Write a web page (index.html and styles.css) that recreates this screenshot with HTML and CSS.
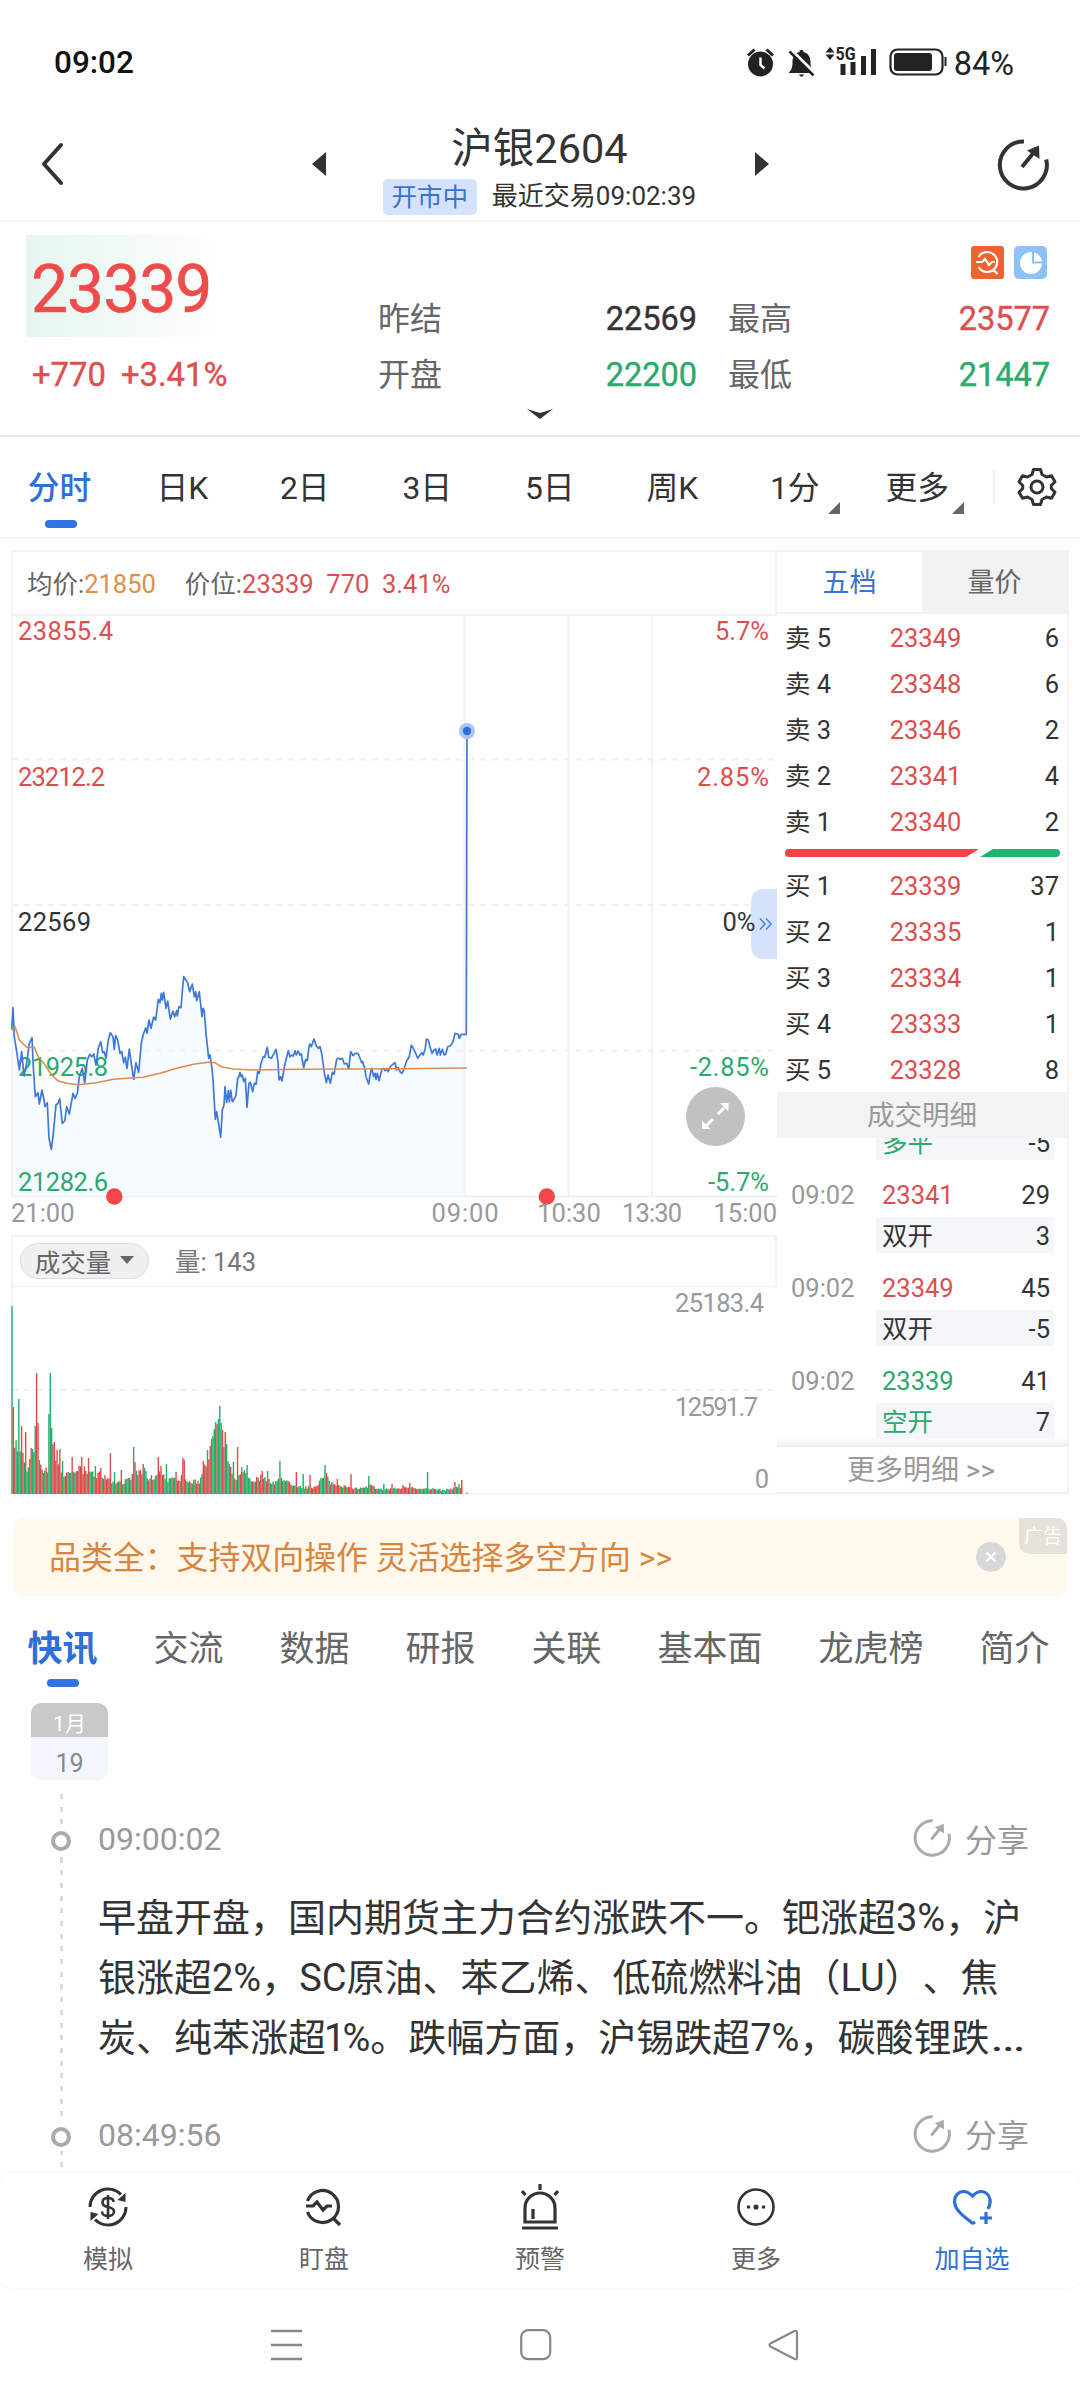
FILE: index.html
```html
<!DOCTYPE html>
<html lang="zh-CN">
<head>
<meta charset="utf-8">
<title>沪银2604</title>
<link rel="stylesheet" href="styles.css">
</head>
<body>
<svg class="defs" width="0" height="0">
  <symbol id="share" viewBox="0 0 52 52">
    <path d="M27 2.5A23.5 23.5 0 1 0 49.2 20.5" fill="none" stroke="currentColor" stroke-width="4"/>
    <path d="M25 28 38 12" stroke="currentColor" stroke-width="4" fill="none"/>
    <path d="M42 6.500 42.500 20 30 11.500z" fill="currentColor"/>
  </symbol>
</svg>
<div class="phone">
  <div class="status">
    <span class="clock">09:02</span>
    <svg class="status-icons" width="206" height="40" viewBox="742 42 206 40">
      <g fill="#222">
        <circle cx="760.500" cy="64" r="12.500"/>
        <path d="M748 55.500l6.500-6M773 55.500l-6.500-6" stroke="#222" stroke-width="3"/>
        <path d="M760.500 57.500v7.500l4 3.500" stroke="#fff" stroke-width="2.500" fill="none"/>
        <path d="M788.500 73c3-3 4-5 4-11 0-6 3-9 7-10 0-3 4-3 4 0 4 1 7 4 7 10 0 6 1 8 4 11z"/>
        <path d="M798.500 74.500h6l-3 2.500z"/>
        <path d="M791 50.500 816 75" stroke="#fff" stroke-width="4"/>
        <path d="M789.500 51.500 813.500 75.500" stroke="#222" stroke-width="2.500"/>
        <path d="M830 47l4.500 5.500h-9zM830 60l4.500-5.500h-9z"/>
        <rect x="840.500" y="64" width="5" height="11"/><rect x="850.500" y="62" width="5" height="13"/>
        <rect x="861" y="56" width="5" height="19"/><rect x="871" y="49" width="5" height="26"/>
        <rect x="894" y="53" width="38" height="18" rx="3"/>
        <path d="M945.500 57v9" stroke="#222" stroke-width="2"/>
      </g>
      <rect x="890.500" y="49.500" width="52" height="25" rx="7" fill="none" stroke="#222" stroke-width="2.200"/>
      <text x="835.500" y="60" class="fiveg" textLength="20" lengthAdjust="spacingAndGlyphs">5G</text>
    </svg>
    <span class="battery">84%</span>
  </div>

  <header class="top">
    <svg class="back" width="24" height="44" viewBox="0 0 24 44"><path d="M21 3 4 22 21 41" fill="none" stroke="#333" stroke-width="4" stroke-linecap="round" stroke-linejoin="round"/></svg>
    <svg class="prev" width="14" height="24" viewBox="0 0 14 24"><path d="M14 0v24L0 12z" fill="#333"/></svg>
    <div class="title">
      <h1>沪银2604</h1>
      <div class="sub"><span class="badge">开市中</span><span>最近交易09:02:39</span></div>
    </div>
    <svg class="next" width="14" height="24" viewBox="0 0 14 24"><path d="M0 0v24l14-12z" fill="#333"/></svg>
    <svg class="share-top" width="52" height="52"><use href="#share"/></svg>
  </header>

  <section class="quote">
    <div class="last">
      <div class="price">23339</div>
      <div class="change"><span>+770</span><span>+3.41%</span></div>
    </div>
    <div class="stats">
      <div class="marks">
        <svg width="33" height="33" viewBox="0 0 33 33"><rect width="33" height="33" rx="3" fill="#ee632f"/><path d="M7.500 11A10 10 0 1 1 7.500 21M22.500 24l4 4M5 16h6l3-3 4 6 3-3h3" fill="none" stroke="#fff" stroke-width="2.200"/></svg>
        <svg width="33" height="33" viewBox="0 0 33 33"><rect width="33" height="33" rx="5" fill="#8bc2f8"/><circle cx="17" cy="17" r="11" fill="#fff"/><path d="M19 5v11.500h11" fill="none" stroke="#8bc2f8" stroke-width="2"/></svg>
      </div>
      <div class="grid">
        <span class="k">昨结</span><b>22569</b><span class="k">最高</span><b class="up">23577</b>
        <span class="k">开盘</span><b class="down">22200</b><span class="k">最低</span><b class="down">21447</b>
      </div>
    </div>
    <svg class="more" width="28" height="10" viewBox="0 0 28 10"><path d="M1 0 14 4 27 0 14 10z" fill="#333"/></svg>
  </section>

  <nav class="periods">
    <span class="on">分时</span><span>日K</span><span>2日</span><span>3日</span><span>5日</span><span>周K</span><span class="drop">1分</span><span class="drop">更多</span>
    <i class="sep"></i>
    <svg class="gear" width="40" height="40" viewBox="0 0 40 40"><path d="M16.500 2.500h7l1.500 5 4.500 2.500 5-1.200 3.500 6-3.700 3.700v3l3.700 3.700-3.500 6-5-1.200-4.500 2.500-1.500 5h-7l-1.500-5-4.500-2.500-5 1.200-3.500-6 3.700-3.700v-3L2 14.800l3.500-6 5 1.200L15 7.500z" fill="none" stroke="#333" stroke-width="3" stroke-linejoin="round"/><circle cx="20" cy="20" r="6" fill="none" stroke="#333" stroke-width="3"/></svg>
  </nav>

  <main class="market">
    <div class="charts">
      <div class="legend"><span>均价:<em class="avg">21850</em></span><span>价位:<em>23339&nbsp; 770&nbsp; 3.41%</em></span></div>
      <svg class="chart" width="766" height="621" viewBox="11 614 766 621">
        <path id="area" fill="#f6fbff"/>
        <g stroke="#f2f2f2" stroke-width="2" fill="none">
          <path d="M11 615H777M11 1196.500H777M464.500 615V1196M568.500 615V1196M652 615V1196"/>
          <path d="M12 614V1196" />
          <path d="M12 759.500H777M12 905H777M12 1050.500H777" stroke-dasharray="6 6"/>
        </g>
        <g class="lab up"><text x="18" y="640" textLength="95">23855.4</text><text x="18" y="786" textLength="87">23212.2</text><text x="769" y="640" class="r">5.7%</text><text x="769" y="786" class="r" textLength="72">2.85%</text></g>
        <g class="lab"><text x="18" y="931" textLength="73">22569</text></g>
        <g class="lab down"><text x="18" y="1076" textLength="90">21925.8</text><text x="18" y="1191" textLength="90">21282.6</text><text x="769" y="1076" class="r" textLength="79">-2.85%</text><text x="769" y="1191" class="r">-5.7%</text></g>
        <path id="line" fill="none" stroke="#3f79d8" stroke-width="1.700" stroke-linejoin="round"/>
        <path id="mean" fill="none" stroke="#dc8c50" stroke-width="1.600"/>
        <circle cx="467" cy="731" r="8" fill="#a9c6f4"/><circle cx="467" cy="731" r="4.200" fill="#2f6fdc"/>
        <path d="M777 889h-14a12 12 0 0 0-12 12v46a12 12 0 0 0 12 12h14z" fill="#d5e2fb"/>
        <path d="M760 918.500l5 5.500-5 5.500M766 918.500l5 5.500-5 5.500" fill="none" stroke="#4d86e4" stroke-width="1.600"/>
        <g class="lab"><text x="755.500" y="931" class="r">0%</text></g>
        <circle cx="715.500" cy="1116.500" r="29.500" fill="#c1c1c1"/>
        <path d="M718 1114l6-6M713 1119l-6 6" stroke="#fff" stroke-width="3"/>
        <path d="M728.500 1103v8.500l-8.500-8.500zM702 1129v-8.500l8.500 8.500z" fill="#fff"/>
        <g class="lab axis"><text x="11" y="1222">21:00</text><text x="465" y="1222" class="m" textLength="67">09:00</text><text x="569" y="1222" class="m">10:30</text><text x="652" y="1222" class="m" textLength="60">13:30</text><text x="777" y="1222" class="r">15:00</text></g>
        <circle cx="114.300" cy="1196.500" r="8.200" fill="#f34646"/><circle cx="546.800" cy="1196.500" r="8.200" fill="#f34646"/>
      </svg>
      <div class="volhead"><span class="pill">成交量<svg width="14" height="8" viewBox="0 0 14 8"><path d="M0 0h14L7 8z" fill="#666"/></svg></span><span>量: 143</span></div>
      <svg class="chart" width="766" height="208" viewBox="11 1286 766 208">
        <path d="M11 1286.500H777M11 1493.500H777M12 1286V1494" stroke="#f2f2f2" stroke-width="1.500"/>
        <path d="M12 1390H777" stroke="#f2f2f2" stroke-width="2" stroke-dasharray="6 6"/>
        <g id="bars"></g>
        <g class="lab axis"><text x="764" y="1312" class="r" textLength="89">25183.4</text><text x="758" y="1416" class="r" textLength="83">12591.7</text><text x="769" y="1488" class="r">0</text></g>
      </svg>
    </div>

    <aside class="book">
      <div class="booktabs"><span class="on">五档</span><span>量价</span></div>
      <div class="levels">
        <div><span>卖 5</span><em>23349</em><b>6</b></div>
        <div><span>卖 4</span><em>23348</em><b>6</b></div>
        <div><span>卖 3</span><em>23346</em><b>2</b></div>
        <div><span>卖 2</span><em>23341</em><b>4</b></div>
        <div><span>卖 1</span><em>23340</em><b>2</b></div>
      </div>
      <svg class="ratio" width="275" height="8" viewBox="0 0 275 8"><path d="M4 0H194L181 8H4a4 4 0 0 1 0-8z" fill="#ef4446"/><path d="M208 0h63a4 4 0 0 1 0 8h-76z" fill="#1fb36c"/></svg>
      <div class="levels buy">
        <div><span>买 1</span><em>23339</em><b>37</b></div>
        <div><span>买 2</span><em>23335</em><b>1</b></div>
        <div><span>买 3</span><em>23334</em><b>1</b></div>
        <div><span>买 4</span><em>23333</em><b>1</b></div>
        <div><span>买 5</span><em>23328</em><b>8</b></div>
      </div>
      <div class="ticktitle">成交明细</div>
      <div class="ticks">
        <div class="tick"><div class="kind"><span class="down">多平</span><b>-5</b></div></div>
        <div class="tick"><div class="deal"><time>09:02</time><em class="up">23341</em><b>29</b></div><div class="kind"><span>双开</span><b>3</b></div></div>
        <div class="tick"><div class="deal"><time>09:02</time><em class="up">23349</em><b>45</b></div><div class="kind"><span>双开</span><b>-5</b></div></div>
        <div class="tick"><div class="deal"><time>09:02</time><em class="down">23339</em><b>41</b></div><div class="kind"><span class="down">空开</span><b>7</b></div></div>
      </div>
      <div class="tickmore">更多明细 &gt;&gt;</div>
    </aside>
  </main>

  <div class="ad">
    <span>品类全：支持双向操作 灵活选择多空方向 &gt;&gt;</span>
    <svg width="30" height="30" viewBox="0 0 30 30"><circle cx="15" cy="15" r="15" fill="#d8d8d8"/><path d="M10.500 10.500l9 9M19.500 10.500l-9 9" stroke="#fff" stroke-width="2.200"/></svg>
    <i>广告</i>
  </div>

  <nav class="topics"><span class="on">快讯</span><span>交流</span><span>数据</span><span>研报</span><span>关联</span><span>基本面</span><span>龙虎榜</span><span>简介</span></nav>

  <section class="feed">
    <div class="date"><span>1月</span><b>19</b></div>
    <div class="timeline">
      <article>
        <div class="meta"><i class="node"></i><time>09:00:02</time><svg width="38" height="38"><use href="#share"/></svg><span>分享</span></div>
        <p><span>早盘开盘，国内期货主力合约涨跌不一。钯涨超3%，沪</span><span>银涨超2%，SC原油、苯乙烯、低硫燃料油（LU）、焦</span><span>炭、纯苯涨超<em class="one">1</em>%。跌幅方面，沪锡跌超7%，碳酸锂跌<em class="dots">…</em></span></p>
      </article>
      <article>
        <div class="meta"><i class="node"></i><time>08:49:56</time><svg width="38" height="38"><use href="#share"/></svg><span>分享</span></div>
      </article>
    </div>
  </section>

  <footer class="dock">
    <a><svg width="48" height="48" viewBox="0 0 48 48"><g fill="none" stroke="#333" stroke-width="3"><path d="M6 24A18 18 0 0 1 37 11.500M42 24A18 18 0 0 1 11 36.500"/><path d="M29.500 19c0-3-2.500-4-5.500-4s-5.500 1.500-5.500 4.500 3 4 5.500 4.500 6 1.500 6 4.500-3 4.500-6 4.500-6-1.500-6-4.500M24 12v24" stroke-width="2.600"/></g><path d="M41.500 10v9l-8-2zM6.500 38v-9l8 2z" fill="#333"/></svg>模拟</a>
    <a><svg width="48" height="48" viewBox="0 0 48 48"><path d="M7.500 18A16 16 0 1 1 7.500 29M33 35l7 7M6 23h7l4-4 6 8 4-4h5" fill="none" stroke="#333" stroke-width="3.200"/></svg>盯盘</a>
    <a><svg width="48" height="48" viewBox="0 0 48 48"><path d="M9 39V25a15 15 0 0 1 30 0v14zM6 45h36M17 36V26M24 1v6M6 8l3.500 4M42 8l-3.500 4" fill="none" stroke="#333" stroke-width="3.200"/></svg>预警</a>
    <a><svg width="48" height="48" viewBox="0 0 48 48"><circle cx="24" cy="24" r="17.500" fill="none" stroke="#333" stroke-width="2.600"/><g fill="#333"><circle cx="16.500" cy="24" r="1.800"/><circle cx="24" cy="24" r="2.600"/><circle cx="31.500" cy="24" r="1.800"/></g></svg>更多</a>
    <a class="on"><svg width="48" height="48" viewBox="0 0 48 48"><path d="M40 26c2-3.500 2.500-6 2-9.500C41 11 37 8.500 33 8.500c-4 0-6.500 2.500-8.500 4.500-2-2-4.500-4.500-9-4.500C10.500 8.500 6.500 13 6.500 18c0 9 9 15 17 21.500 1 .8 2 .8 3.500-.5M38 29v12M32 35h12" fill="none" stroke="#2f6fd8" stroke-width="3.200"/></svg>加自选</a>
  </footer>

  <div class="sysnav">
    <svg width="32" height="32" viewBox="0 0 32 32"><path d="M0 2h31M0 16h31M0 30h31" stroke="#888" stroke-width="2.400"/></svg>
    <svg width="32" height="32" viewBox="0 0 32 32"><rect x="1.200" y="1.200" width="29" height="29" rx="7" fill="none" stroke="#888" stroke-width="2.200"/></svg>
    <svg width="32" height="32" viewBox="0 0 32 32"><path d="M26.500 2 2.500 14.500q-2 1.500 0 3L26.500 30q2.500 1 2.500-2V4q0-3-2.500-2z" fill="none" stroke="#888" stroke-width="2.200"/></svg>
  </div>
</div>
<script src="chart.js"></script>
</body>
</html>
```
FILE: styles.css
```css
* { box-sizing: border-box; }
body { margin: 0; background: #fff; color: #333; font-family: Roboto, "Noto Sans CJK SC", sans-serif; text-spacing-trim: space-all; }
em, i { font-style: normal; }
b { font-weight: 400; }
svg { display: block; flex: none; }
.defs { position: absolute; }
.phone { width: 1080px; height: 2400px; overflow: hidden; background: #fefefe; display: flex; flex-direction: column; }
.phone > * { flex: none; }
.up { color: #dc4f4f; fill: #dc4f4f; }
.down { color: #2baa6c; fill: #2baa6c; }

.status { height: 126px; display: flex; align-items: center; padding: 0 66px 2px 54px; color: #111; font-size: 31.5px; font-weight: 500; }
.status .clock { margin-right: auto; }
.status .battery { margin-left: 6px; font-weight: 400; padding-top: 3px; font-size: 32.5px; color: #222; }
.fiveg { font-size: 17.500px; font-weight: 700; fill: #222; }

.top { height: 96px; border-bottom: 2px solid #f6f6f6; display: flex; align-items: flex-start; padding: 0 30px 0 40px; }
.back { margin: 16px 248px 0 0; }
.prev, .next { margin-top: 26px; }
.title { width: 427px; margin-right: 2px; text-align: center; }
.share-top { margin: 13px 0 0 228px; color: #333; }
h1 { margin: -2px 0 0; font-size: 41.5px; font-weight: 400; line-height: 50px; height: 50px; }
.sub { display: flex; justify-content: center; align-items: center; gap: 15px; font-size: 26px; line-height: 37px; margin-top: 4px; white-space: nowrap; }
.badge { background: #d5e2fb; color: #3a72cd; border-radius: 5px; width: 94px; height: 36px; font-size: 25.5px; }

.quote { height: 215px; border-bottom: 2px solid #e8e8e8; display: grid; grid-template-columns: 353px 1fr; grid-template-rows: 187px 10px; padding: 0 30px 0 26px; }
.price { margin-top: 13px; width: 190px; height: 102px; background: linear-gradient(90deg, #e6f6ee, #fefefe); padding-left: 5px; font-size: 66px; line-height: 109px; color: #ee4b4b; letter-spacing: -1px; -webkit-text-stroke: .6px #ee4b4b; }
.change { display: flex; gap: 15px; padding-left: 6px; font-size: 32.800px; line-height: 40px; margin-top: 18px; color: #dc4f4f; -webkit-text-stroke: .4px #dc4f4f; }
.marks { display: flex; justify-content: flex-end; gap: 10px; padding: 24px 3px 0 0; }
.grid { display: grid; grid-template-columns: 93px 226px 124px 1fr; grid-auto-rows: 56px; font-size: 32px; line-height: 56px; margin: 12px 0 0 -1px; }
.grid > :nth-child(4n+3) { padding-left: 31px; }
.grid .k { color: #666; }
.grid b { text-align: right; font-size: 32.500px; -webkit-text-stroke: .4px currentColor; }
.more { grid-column: 1 / 3; margin-left: 500px; }

.periods { height: 102px; border-bottom: 2px solid #f4f4f4; display: flex; align-items: center; padding-right: 23px; font-size: 31.8px; color: #333; }
.periods span { width: 122.500px; height: 100px; line-height: 103px; text-align: center; position: relative; }
.periods span:first-child { width: 121px; padding-right: 2px; }
.periods .drop::after { content: ""; position: absolute; right: 16px; bottom: 23px; border: 6.500px solid; border-color: transparent #666 #666 transparent; }
.periods .drop + .drop::after { right: 15px; }
.on { color: #2f6fd8; font-weight: 500; }
.periods .on::after, .topics .on::after { content: ""; position: absolute; left: 50%; margin-left: -16px; bottom: 9px; width: 32px; height: 8px; border-radius: 4px; background: #3074e4; }
.sep { width: 2px; height: 34px; background: #f2f2f2; margin-left: 14px; }
.gear { margin-left: auto; }

.market { margin-top: 11px; height: 944px; padding-left: 11px; display: flex; }
.charts { width: 766px; }
.legend { height: 64px; border: 2px solid #f4f4f4; border-bottom: 0; display: flex; align-items: center; gap: 29px; padding: 0 0 4px 14px; font-size: 25.5px; color: #666; white-space: pre; }
.legend em { color: #dc4f4f; }
.legend .avg { color: #dc9048; }
.lab { font-size: 25.500px; }
.lab:not(.up):not(.down) { fill: #333; }
.lab.axis.axis.axis { fill: #999; }
.r { text-anchor: end; }
.m { text-anchor: middle; }
.volhead { height: 51px; border: 2px solid #f4f4f4; border-bottom: 0; display: flex; align-items: center; gap: 26px; padding: 0 7px 2px; font-size: 25.500px; color: #777; }
.volhead > span:last-child { margin-top: -2px; }
.pill { width: 129px; height: 36px; border-radius: 18px; border: 1px solid #ddd; background: #f0f0f0; color: #666; display: flex; align-items: center; justify-content: center; gap: 9px; padding-bottom: 1px; }

.book { width: 292px; border: 2px solid #f2f2f2; border-left: 0; display: flex; flex-direction: column; font-size: 25.500px; }
.booktabs { display: flex; height: 62px; line-height: 63px; font-size: 27px; text-align: center; color: #666; background: #f2f2f2; }
.booktabs span { flex: 1; }
.booktabs .on { background: #fefefe; height: 60px; color: #3a72cd; font-weight: 400; }
.book > * { flex: none; }
.levels { height: 231px; padding: 1px 8px 0; }
.levels.buy { padding-top: 2px; }
.levels div { display: grid; grid-template-columns: 91px 99px 1fr; height: 46px; line-height: 46px; }
.levels em { color: #dc4f4f; text-align: center; }
.levels b { text-align: right; }
.ratio { margin: 4px 0 4px 8px; }
.ticktitle { height: 46px; background: #f3f3f3; color: #999; text-align: center; font-size: 27.500px; line-height: 47px; }
.ticks { height: 309px; overflow: hidden; display: flex; flex-direction: column; justify-content: flex-end; padding: 0 13px 8px 14px; background: linear-gradient(#fefefe 300px, #eee 309px); }
.tick { flex: none; height: 93px; display: flex; flex-direction: column; justify-content: flex-end; }
.deal { height: 44px; line-height: 44px; display: grid; grid-template-columns: 91px 90px 1fr; padding-right: 4px; }
.deal time { color: #999; }
.deal b { text-align: right; }
.kind { height: 36px; line-height: 38px; margin-left: 85px; padding: 0 4px 0 6px; background: #f4f6f9; display: flex; justify-content: space-between; }
.tickmore { height: 45px; line-height: 47px; text-align: center; color: #999; font-size: 28px; padding-right: 2px; }

.ad { margin: 24px 13px 0; height: 78px; border-radius: 10px; background: #fff9ed; display: flex; align-items: center; padding-left: 36px; font-size: 31.900px; color: #d9853f; position: relative; }
.ad span { margin-top: -4px; }
.ad svg { margin-left: auto; margin-right: 61px; }
.ad i { position: absolute; right: 0; top: 0; width: 48px; height: 36px; border-radius: 0 10px 0 10px; background: #e5e2da; color: #fff; font-size: 19px; line-height: 38px; text-align: center; }

.topics { height: 107px; display: flex; gap: 56px; padding-left: 27.500px; font-size: 35px; line-height: 107px; color: #666; white-space: nowrap; }
.topics span { position: relative; }
.topics .on { font-weight: 700; }
.topics .on::after { bottom: 16px; }

.feed { height: 470px; overflow: hidden; }
.date { margin-left: 31px; width: 77px; height: 77px; border-radius: 10px; overflow: hidden; background: #f4f6fd; text-align: center; color: #888; font-size: 25px; }
.date span { display: block; height: 34px; line-height: 42px; background: #c9c9c9; color: #fff; font-size: 21px; }
.date b { line-height: 53px; }
.timeline { margin-top: 14px; padding: 23px 51px 0 98px; background: repeating-linear-gradient(#ddd 0 5px, transparent 5px 12.700px) 60px 0 / 3px 100% no-repeat; }
article { height: 295.500px; }
.meta { height: 44px; display: flex; align-items: center; font-size: 32px; color: #999; position: relative; }
.meta time { margin-right: auto; }
.meta svg { color: #aaa; margin: -2px 14px 0 0; }
.meta span { margin-top: -3px; }
.node { position: absolute; left: -47px; top: 14px; width: 20px; height: 20px; border-radius: 50%; border: 4px solid #aaa; background: #fefefe; box-shadow: 0 0 0 4px #fefefe; }
article p { margin: 27px 0 0; font-size: 38px; line-height: 60px; color: #333; white-space: nowrap; }
article p span { display: block; }
.one { letter-spacing: -3px; margin-left: -2px; }
.dots { display: inline-block; margin-left: 1px; transform: scaleX(1.4); transform-origin: 0 0; }

.dock { height: 115px; display: flex; background: #fff; border-radius: 12px; box-shadow: 0 0 2px #eee; }
.dock a { flex: 1; display: flex; flex-direction: column; align-items: center; font-size: 25px; line-height: 30px; color: #666; padding-top: 10px; gap: 14px; font-weight: 400; }
.dock .on { color: #2f6fd8; }
.sysnav { height: 112px; display: flex; padding: 41px 0 0 271px; gap: 217px; }
.sysnav svg + svg + svg { margin-left: -1px; }
```
FILE: chart.js
```js
// Traces are stored in thirds of a pixel, measured from y = 940.
const price = '35,270 39,203 43,290 50,335 58,390 65,335 72,408 80,370 88,310 96,293 100,380 106,470 114,458 118,492 126,450 132,480 135,500 142,488 147,595 154,628 160,580 168,495 174,490 179,476 187,550 194,543 200,500 208,522 219,460 225,475 232,460 238,410 247,385 254,430 262,360 269,343 275,350 281,342 288,375 295,325 302,305 308,338 313,335 318,355 325,300 331,278 339,290 343,328 347,287 353,300 360,340 365,335 371,368 376,352 381,385 388,327 394,370 401,418 408,368 416,397 424,310 430,283 437,264 441,280 447,240 453,265 461,231 467,240 475,178 480,188 484,160 487,180 491,157 498,205 503,183 511,237 519,213 524,230 530,212 532,228 537,200 543,203 548,140 551,110 563,128 569,155 577,132 583,170 587,155 590,182 598,155 606,230 609,205 613,213 618,280 626,355 630,345 636,385 640,430 646,538 650,515 656,553 662,592 667,510 672,495 675,440 680,487 685,452 688,485 692,450 697,485 704,475 708,465 713,415 717,410 720,397 724,410 727,405 731,425 736,415 741,502 747,430 751,427 758,455 763,430 768,433 773,395 778,400 783,370 790,350 794,352 802,322 806,352 814,355 822,340 828,328 834,365 837,420 842,410 846,423 854,375 865,332 870,350 875,345 880,348 885,332 889,345 894,333 900,345 904,342 911,383 917,358 922,362 927,320 930,312 934,320 942,297 949,318 955,325 960,320 965,340 970,375 974,405 979,428 984,405 991,430 997,397 1002,403 1010,358 1016,355 1021,358 1027,355 1033,372 1040,370 1046,387 1052,335 1059,347 1066,340 1074,340 1080,355 1085,368 1088,365 1094,385 1098,410 1106,432 1110,405 1115,385 1121,410 1125,400 1128,418 1132,400 1137,422 1146,388 1151,385 1155,392 1160,385 1164,395 1170,382 1176,375 1185,368 1190,390 1195,382 1200,395 1206,400 1213,385 1220,362 1228,350 1234,316 1240,325 1247,340 1253,355 1260,345 1265,338 1270,345 1276,325 1279,297 1285,300 1290,320 1296,340 1302,330 1307,327 1311,345 1318,325 1321,345 1327,328 1333,345 1337,343 1343,320 1352,317 1359,305 1365,280 1375,283 1378,295 1384,283 1399,283';
const mean = '35,270 45,260 52,280 58,300 70,312 80,322 103,322 115,350 135,375 155,405 175,423 200,430 235,434 290,428 340,418 400,413 430,412 480,400 530,385 580,373 630,366 645,368 665,381 700,387 760,390 900,388 1200,386 1401,384';
const trace = s => 'M' + s.split(' ').map(p => {
  const [x, y] = p.split(',');
  return (x / 3).toFixed(1) + ' ' + (940 + y / 3).toFixed(1);
}).join('L');
document.getElementById('line').setAttribute('d', trace(price) + 'L467 731');
document.getElementById('area').setAttribute('d', trace(price) + 'L466.5 1196H12z');
document.getElementById('mean').setAttribute('d', trace(mean));

// Volume: baseline level by x, then the individual spikes [x, height, colour].
const level = [[12,60],[20,45],[28,28],[33,42],[38,45],[43,25],[47,24],[53,45],[60,28],[65,18],[75,26],[82,26],[90,20],[100,22],[108,14],[118,12],[128,14],[134,20],[143,25],[150,16],[160,22],[170,14],[180,18],[190,12],[200,14],[206,38],[215,62],[220,70],[225,45],[230,25],[236,16],[245,22],[252,14],[262,18],[275,12],[283,18],[292,8],[305,7],[315,8],[325,20],[330,12],[340,10],[350,6],[365,6],[370,9],[380,5],[400,6],[410,9],[420,5],[430,6],[445,4],[455,7],[464,7]];
const spikes = [[12,188,1],[13.4,87,0],[18.5,95,1],[21,68,0],[25,62,0],[31,46,0],[35,68,1],[36.3,121,0],[38,71,0],[48.5,80,1],[50,121,1],[51.5,66,1],[54,52,0],[57,44,0],[60,45,0],[63,33,1],[72,37,0],[82,37,0],[88,36,0],[95,28,1],[101,26,0],[110,41,0],[114,22,1],[121,24,0],[133,47,1],[135,32,0],[143,30,0],[158,37,0],[161,28,0],[166,30,1],[176,22,0],[183,36,0],[184.500,34,0],[203,33,0],[207,44,1],[210,48,0],[213,58,1],[215,72,1],[217,70,0],[218.300,75,1],[219.700,88,1],[221,71,1],[222.500,64,0],[225,62,0],[227,50,1],[233,32,1],[237.500,47,0],[242,27,1],[247,29,1],[262,23,0],[268,23,1],[280,33,1],[296,22,0],[303,20,1],[310,19,0],[325,29,1],[327,21,0],[338,15,0],[351,20,0],[369,18,1],[384,10,1],[392,10,0],[403,9,0],[410,11,0],[428,22,1],[455,12,0],[459,10,1],[462,14,0]];
const step = 1.367;
let seed = 7, rects = '';
const rnd = () => (seed = (seed * 16807) % 2147483647) / 2147483647;
const bar = (x, h, g) => `<rect x="${(x - 0.7).toFixed(2)}" y="${(1494 - h).toFixed(1)}" width="1.4" height="${h.toFixed(1)}" fill="${g ? '#23ae6b' : '#e14a47'}"/>`;
let k = 0;
for (let x = 12; x < 463; x += step) {
  while (k < level.length - 2 && level[k + 1][0] < x) k++;
  const [a, ha] = level[k], [b, hb] = level[k + 1];
  const h = (ha + (hb - ha) * (x - a) / (b - a)) * (0.72 + 0.42 * rnd());
  const hit = spikes.find(s => Math.abs(s[0] - x) <= step / 2);
  rects += hit ? bar(x, hit[1], hit[2]) : bar(x, h, rnd() > 0.5);
}
document.getElementById('bars').innerHTML = rects + bar(467, 1.2, 0);
```
